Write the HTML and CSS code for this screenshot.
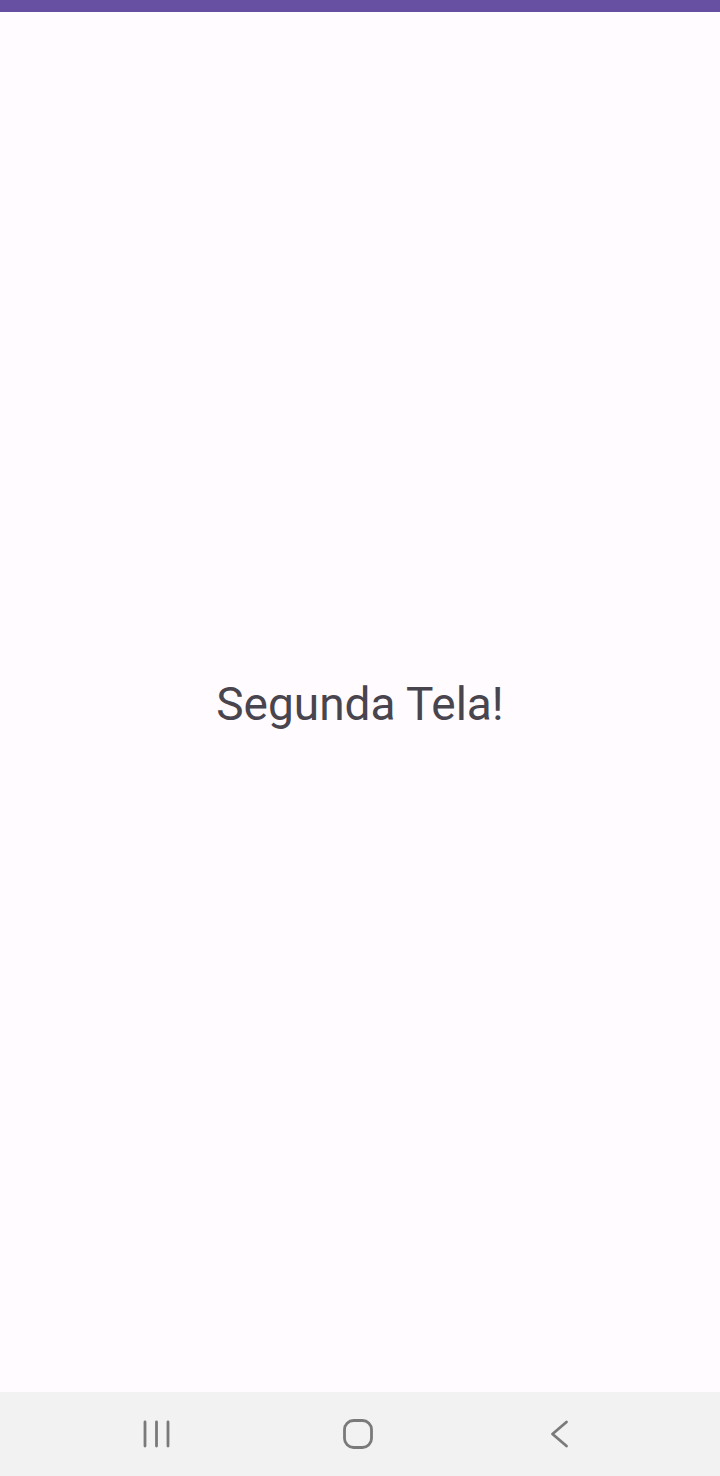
FILE: index.html
```html
<!DOCTYPE html>
<html lang="pt">
<head>
<meta charset="utf-8">
<link rel="stylesheet" href="styles.css">
</head>
<body>
<div class="screen">
  <div class="status-bar"></div>
  <main class="content">
    <p class="title">Segunda Tela!</p>
  </main>
  <nav class="nav-bar">
    <svg class="nav-icon" width="30" height="30" viewBox="0 0 30 30" aria-label="Recentes">
      <g stroke="#7a7a7a" stroke-width="2.8" stroke-linecap="round">
        <line x1="3" y1="3" x2="3" y2="27"/>
        <line x1="14.5" y1="3" x2="14.5" y2="27"/>
        <line x1="26" y1="3" x2="26" y2="27"/>
      </g>
    </svg>
    <svg class="nav-icon" width="30" height="30" viewBox="0 0 30 30" aria-label="Início">
      <rect x="1.5" y="1.5" width="27" height="27" rx="9" fill="none" stroke="#7a7a7a" stroke-width="2.8"/>
    </svg>
    <svg class="nav-icon" width="30" height="30" viewBox="0 0 30 30" aria-label="Voltar">
      <polyline points="22.5,3 8.5,15 22.5,27" fill="none" stroke="#7a7a7a" stroke-width="2.8" stroke-linecap="round" stroke-linejoin="round"/>
    </svg>
  </nav>
</div>
</body>
</html>
```

FILE: styles.css
```css
html, body {
  margin: 0;
  padding: 0;
}
body {
  width: 720px;
  height: 1476px;
  background: #fffbfe;
  font-family: Roboto, "Noto Sans", sans-serif;
}
.screen {
  display: flex;
  flex-direction: column;
  height: 1476px;
}
.status-bar {
  height: 12px;
  background: #674fa2;
  flex: none;
}
.content {
  flex: 1;
  display: flex;
  align-items: center;
  justify-content: center;
  background: #fffbfe;
}
.title {
  margin: 0;
  font-size: 46px;
  color: #49454f;
  font-weight: 400;
  transform: translateY(2px);
}
.nav-bar {
  flex: none;
  height: 84px;
  background: #f2f2f2;
  display: flex;
  align-items: center;
  justify-content: space-between;
  padding: 0 146px 0 142px;
}
.nav-icon {
  display: block;
}
```
